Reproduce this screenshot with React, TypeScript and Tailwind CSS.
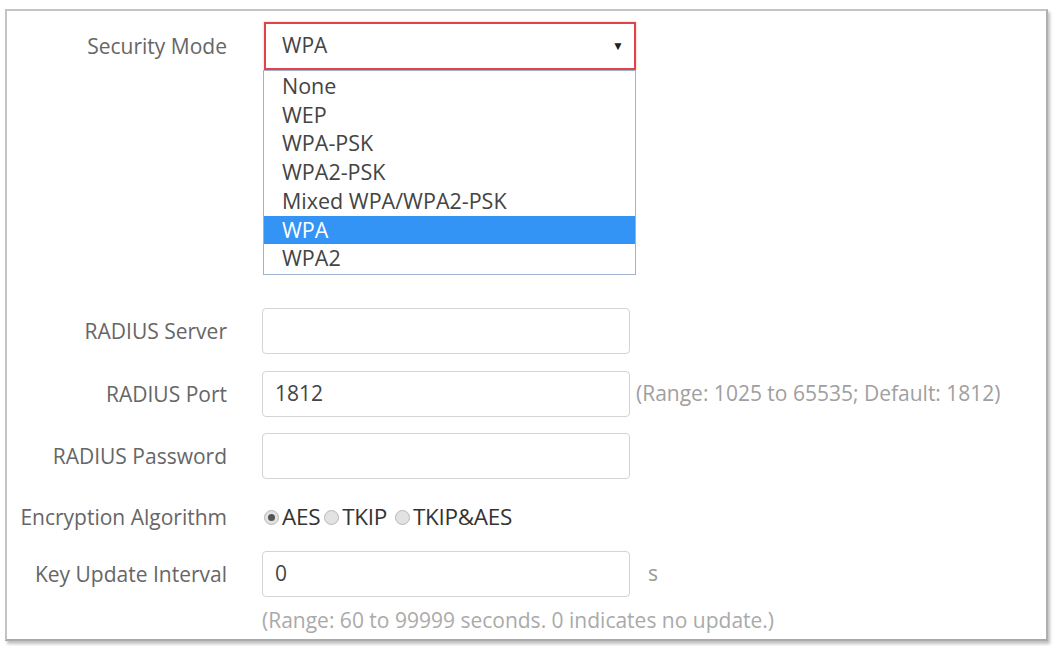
import { ReactNode } from "react";

const font = { fontFamily: '"Open Sans", "Noto Sans", sans-serif' };

const options = ["None", "WEP", "WPA-PSK", "WPA2-PSK", "Mixed WPA/WPA2-PSK", "WPA", "WPA2"];

function Row({ label, className, children }: { label: string; className: string; children?: ReactNode }) {
  return (
    <div className={`flex items-center ${className}`}>
      <div className="w-[221px] shrink-0 pr-[1px] pt-[2px] text-right text-[#666]">{label}</div>
      <div className="ml-[34px] flex items-center">{children}</div>
    </div>
  );
}

function TextBox({ value = "" }: { value?: string }) {
  return (
    <div className="flex h-[46px] w-[368px] items-center rounded-[4px] border border-[#d4d4d4] px-[12px] text-[#444]">
      {value}
    </div>
  );
}

function Radio({ checked, label, className }: { checked?: boolean; label: string; className: string }) {
  return (
    <span className={`flex items-center ${className}`}>
      <span className="flex h-[15px] w-[15px] items-center justify-center rounded-full border border-[#b8b8b8] bg-[#e2e2e2]">
        {checked && <span className="h-[7px] w-[7px] rounded-full bg-[#555]" />}
      </span>
      <span className="ml-[3px] text-[22.5px] tracking-[-0.3px] text-[#333]">{label}</span>
    </span>
  );
}

export default function App() {
  return (
    <div className="h-[646px] w-[1054px] overflow-hidden bg-white pl-[5px] pt-[9px] text-[21px]" style={font}>
      <div className="h-[632px] w-[1043px] border-2 border-[#c4c4c4] border-r-[#b0b0b0] border-b-[#aaa] shadow-[2px_3px_3px_rgba(0,0,0,0.25)]">
        {/* Security Mode */}
        <Row label="Security Mode" className="mt-[11px] h-[48px]">
          <div className="relative ml-[2px]">
            <div className="flex h-[48px] w-[372px] items-center justify-between border-2 border-[#e0444a] pl-[16px] pr-[10px] text-[#444] shadow-[0_0_2px_rgba(240,120,60,0.5)]">
              <span>WPA</span>
              <span className="text-[12px] text-[#222]">▼</span>
            </div>
            {/* open list */}
            <div className="absolute left-[-1px] top-[48px] z-10 w-[373px] border border-[#9fb3cf] bg-white py-[1px] text-[21.5px] leading-[28.7px] text-[#444]">
              {options.map((o, i) => (
                <div key={o} className={i === 5 ? "bg-[#3394f5] pl-[18px] text-white" : "pl-[18px]"}>
                  {o}
                </div>
              ))}
            </div>
          </div>
        </Row>

        <Row label="RADIUS Server" className="mt-[238px] h-[46px]">
          <TextBox />
        </Row>
        <Row label="RADIUS Port" className="mt-[17px] h-[46px]">
          <TextBox value="1812" />
          <span className="ml-[6px] text-[#a0a0a0]">(Range: 1025 to 65535; Default: 1812)</span>
        </Row>
        <Row label="RADIUS Password" className="mt-[16px] h-[46px]">
          <TextBox />
        </Row>
        <Row label="Encryption Algorithm" className="mt-[15px] h-[46px]">
          <Radio checked label="AES" className="ml-[2px]" />
          <Radio label="TKIP" className="ml-[4px]" />
          <Radio label="TKIP&AES" className="ml-[8px]" />
        </Row>
        <Row label="Key Update Interval" className="mt-[10px] h-[47px]">
          <TextBox value="0" />
          <span className="ml-[18px] text-[#999]">s</span>
        </Row>
        <div className="ml-[255px] mt-[8px] text-[#aaa]">(Range: 60 to 99999 seconds. 0 indicates no update.)</div>
      </div>
    </div>
  );
}
